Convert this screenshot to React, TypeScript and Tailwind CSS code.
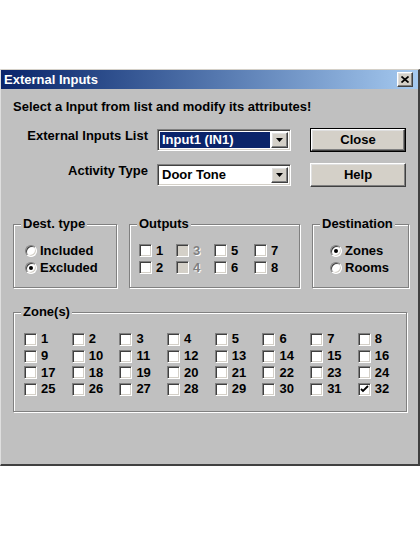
import React from "react";

const raised =
  "border border-t-white border-l-white border-r-[#404040] border-b-[#404040] shadow-[inset_-1px_-1px_0_#808080,inset_1px_1px_0_#dfdfdf]";
const sunken =
  "border border-t-[#808080] border-l-[#808080] border-r-white border-b-white shadow-[inset_1px_1px_0_#404040,inset_-1px_-1px_0_#d4d0c8]";
const etched = "border border-[#808080] shadow-[inset_1px_1px_0_#fff,1px_1px_0_#fff]";

function Check({ label, checked, disabled }: { label: string; checked?: boolean; disabled?: boolean }) {
  return (
    <div className="flex items-center h-full">
      <span
        className={`w-[13px] h-[13px] shrink-0 flex items-center justify-center ${sunken} ${
          disabled ? "bg-[#d4d0c8]" : "bg-white"
        }`}
      >
        {checked && (
          <svg width="9" height="9" viewBox="0 0 9 9">
            <path d="M1 4 L3 6 L8 1" stroke="#000" strokeWidth="1.8" fill="none" />
          </svg>
        )}
      </span>
      <span
        className={`ml-[4px] leading-[14px] ${
          disabled ? "text-[#808080] [text-shadow:1px_1px_0_#fff]" : "text-black"
        }`}
      >
        {label}
      </span>
    </div>
  );
}

function Radio({ label, checked }: { label: string; checked?: boolean }) {
  return (
    <div className="flex items-center h-[17px]">
      <span
        className={`w-[12px] h-[12px] shrink-0 rounded-full bg-white flex items-center justify-center ${sunken}`}
      >
        {checked && <span className="w-[4px] h-[4px] rounded-full bg-black" />}
      </span>
      <span className="ml-[3px] leading-[14px]">{label}</span>
    </div>
  );
}

function Combo({ text, selected }: { text: string; selected?: boolean }) {
  return (
    <div className={`w-[134px] h-[22px] bg-white flex items-center p-[2px] ${sunken}`}>
      <div
        className={`flex-1 h-full flex items-center pl-[2px] ${
          selected ? "bg-[#0a246a] text-white" : "text-black"
        }`}
      >
        {text}
      </div>
      <div className={`w-[17px] h-full bg-[#d4d0c8] flex items-center justify-center ml-[1px] ${raised}`}>
        <svg width="7" height="4" viewBox="0 0 7 4">
          <path d="M0 0 H7 L3.5 4 Z" fill="#000" />
        </svg>
      </div>
    </div>
  );
}

function Group({ title, className, children }: { title: string; className: string; children: React.ReactNode }) {
  return (
    <fieldset className={`${etched} ${className}`}>
      <legend className="ml-[7px] px-[2px] leading-[14px] bg-[#c0c0c0]">{title}</legend>
      {children}
    </fieldset>
  );
}

export default function App() {
  const zones = Array.from({ length: 32 }, (_, i) => i + 1);
  return (
    <div className="w-[420px] h-[534px] bg-white pt-[69px] font-['Liberation_Sans',Arial,sans-serif] font-bold text-[13px] text-black">
      <div className="w-[420px] h-[397px] bg-[#c0c0c0] border-t border-l border-t-[#d4d0c8] border-l-[#dfdfdf] border-r-2 border-b-2 border-r-[#404040] border-b-[#404040] flex flex-col">
        {/* title bar */}
        <div className="h-[19px] flex items-center bg-gradient-to-r from-[#0a246a] to-[#a6caf0] pl-[3px] pr-[5px]">
          <span className="text-white text-[13px] leading-[16px]">External Inputs</span>
          <div className={`ml-auto w-[16px] h-[15px] bg-[#d4d0c8] flex items-center justify-center ${raised}`}>
            <svg width="8" height="7" viewBox="0 0 8 7">
              <path d="M0.5 0.5 L7.5 6.5 M7.5 0.5 L0.5 6.5" stroke="#000" strokeWidth="1.7" />
            </svg>
          </div>
        </div>

        <div className="pl-[12px] pt-[11px]">
          <p className="leading-[14px]">Select a Input from list and modify its attributes!</p>

          <div className="flex mt-[14px]">
            <div className="w-[135px] text-right pt-[1px] leading-[14px]">External Inputs List</div>
            <div className="ml-[9px] mt-[1px]">
              <Combo text="Input1 (IN1)" selected />
            </div>
            <button className="ml-[19px] w-[96px] h-[24px] bg-[#d4d0c8] border border-black flex items-center justify-center">
              <span className={`w-full h-full flex items-center justify-center ${raised}`}>Close</span>
            </button>
          </div>

          <div className="flex mt-[11px]">
            <div className="w-[135px] text-right pt-[1px] leading-[14px]">Activity Type</div>
            <div className="ml-[9px] mt-[1px]">
              <Combo text="Door Tone" />
            </div>
            <button
              className={`ml-[19px] w-[96px] h-[24px] bg-[#d4d0c8] flex items-center justify-center ${raised}`}
            >
              Help
            </button>
          </div>

          <div className="flex mt-[30px]">
            <Group title="Dest. type" className="w-[104px] h-[71px]">
              <div className="pl-[11px] pt-[11px]">
                <Radio label="Included" />
                <Radio label="Excluded" checked />
              </div>
            </Group>
            <Group title="Outputs" className="ml-[12px] w-[171px] h-[71px]">
              <div className="pl-[9px] pt-[11px] grid grid-cols-[37px_38px_40px_auto] grid-rows-[17px_17px]">
                <Check label="1" />
                <Check label="3" disabled />
                <Check label="5" />
                <Check label="7" />
                <Check label="2" />
                <Check label="4" disabled />
                <Check label="6" />
                <Check label="8" />
              </div>
            </Group>
            <Group title="Destination" className="ml-[12px] w-[97px] h-[71px]">
              <div className="pl-[17px] pt-[11px]">
                <Radio label="Zones" checked />
                <Radio label="Rooms" />
              </div>
            </Group>
          </div>

          <Group title="Zone(s)" className="mt-[17px] w-[393px] h-[107px]">
            <div className="pl-[10px] pt-[12px] grid grid-cols-[repeat(8,47.7px)] auto-rows-[16.7px]">
              {zones.map((z) => (
                <Check key={z} label={String(z)} checked={z === 32} />
              ))}
            </div>
          </Group>
        </div>
      </div>
    </div>
  );
}
